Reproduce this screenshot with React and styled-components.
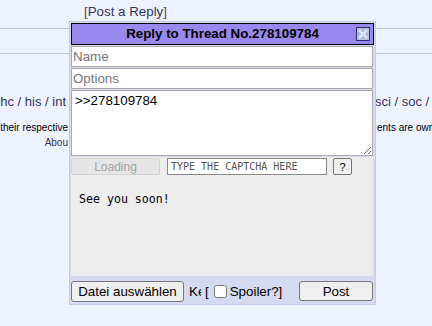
import React from 'react'
import styled, { createGlobalStyle } from 'styled-components'

const GlobalStyle = createGlobalStyle`
  html, body {
    margin: 0;
    padding: 0;
    background: #eef2ff;
  }
  body {
    font-family: "Liberation Sans", Arial, sans-serif;
    font-size: 13.33px;
    color: #000;
    overflow: hidden;
  }
`

const Page = styled.div`
  position: relative;
  width: 432px;
  height: 326px;
  overflow: hidden;
`

const PostLinkBar = styled.div`
  padding: 4px 0 0 84px;
  height: 17px;
  line-height: 16px;
  font-size: 13.33px;
  color: #6b4a1e;

  a {
    color: #34345c;
    text-decoration: none;
  }
`

const Rule = styled.hr`
  margin: ${p => p.$top}px 0 0;
  border: 0;
  border-top: 1px solid #b7c5d9;
  height: 0;
`

const Footer = styled.div`
  padding-top: ${p => p.$top}px;
`

const SplitLine = styled.div`
  display: grid;
  grid-template-columns: ${p => p.$left}px 309px 1fr;
  white-space: pre;
  font-size: ${p => p.$size}px;
  line-height: ${p => p.$line}px;
  color: ${p => p.$color};
  margin-top: ${p => p.$gap || 0}px;
`

const LeftCell = styled.span`
  overflow: hidden;
  display: flex;
  justify-content: flex-end;
`

const MidCell = styled.span`
  overflow: hidden;
  padding-left: 4px;
`

const RightCell = styled.span`
  overflow: hidden;
`

const QuickReply = styled.div`
  position: absolute;
  left: 69px;
  top: 21px;
  width: 303px;
  padding: 1px;
  background: #d6daf0;
  border: 1px solid #c4cbe6;
  display: flex;
  flex-direction: column;
  gap: 1px;
`

const Header = styled.div`
  position: relative;
  height: 20px;
  line-height: 20px;
  border: 1px solid #000;
  background: #9988ee;
  text-align: center;
  font-weight: bold;
  font-size: 13.33px;
`

const CloseIcon = styled.svg`
  position: absolute;
  right: 3px;
  top: 3px;
  display: block;
`

const Field = styled.input`
  box-sizing: border-box;
  width: 302px;
  height: 21px;
  margin: 0;
  padding: 1px 1px;
  border: 1px solid #aaa;
  background: #fff;
  font-family: "Liberation Sans", Arial, sans-serif;
  font-size: 13.33px;
  color: #000;

  &::placeholder {
    color: #757575;
  }
`

const Comment = styled.textarea`
  box-sizing: border-box;
  width: 302px;
  height: 66px;
  margin: 0;
  padding: 2px 3px;
  border: 1px solid #aaa;
  background: #fff;
  font-family: "Liberation Sans", Arial, sans-serif;
  font-size: 13.33px;
  color: #000;
  resize: both;
`

const CaptchaBox = styled.div`
  width: 302px;
  height: 119px;
  background: #ededed;
`

const CaptchaRow = styled.div`
  display: flex;
  align-items: center;
  height: 17px;
  margin-top: 1px;
`

const LoadButton = styled.button`
  box-sizing: border-box;
  width: 89px;
  height: 17px;
  padding: 0;
  border: 1px solid #d2d2d2;
  border-radius: 2px;
  background: #e6e6e6;
  color: #a3a3a3;
  font-family: "Liberation Sans", Arial, sans-serif;
  font-size: 12px;
`

const CaptchaInput = styled.input`
  box-sizing: border-box;
  width: 160px;
  height: 17px;
  margin: 0 0 0 7px;
  padding: 0 3px;
  border: 1px solid #888;
  background: #fff;
  font-family: "DejaVu Sans Mono", monospace;
  font-size: 10px;

  &::placeholder {
    color: #555;
  }
`

const SmallButton = styled.button`
  box-sizing: border-box;
  width: 19px;
  height: 17px;
  margin-left: 6px;
  padding: 0;
  border: 1px solid #777;
  border-radius: 2px;
  background: #efefef;
  font-family: "Liberation Sans", Arial, sans-serif;
  font-size: 11px;
  color: #000;
`

const CaptchaMessage = styled.div`
  margin: 17px 0 0 8px;
  font-family: "DejaVu Sans Mono", monospace;
  font-size: 11.6px;
  line-height: 14px;
`

const BottomRow = styled.div`
  display: flex;
  align-items: center;
  height: 22px;
  margin-top: 3px;
  margin-bottom: 1px;
  white-space: nowrap;
  font-size: 13.33px;
`

const NativeButton = styled.button`
  box-sizing: border-box;
  width: ${p => p.$width}px;
  height: ${p => p.$height}px;
  padding: 0;
  margin-left: ${p => p.$push ? 'auto' : '0'};
  margin-right: ${p => p.$push ? '1px' : '0'};
  border: 1px solid #767676;
  border-radius: 3px;
  background: #efefef;
  font-family: "Liberation Sans", Arial, sans-serif;
  font-size: 13.33px;
  color: #000;
`

const FileName = styled.span`
  display: inline-block;
  width: 12px;
  overflow: hidden;
  margin-left: 5px;
`

const SpoilerLabel = styled.label`
  display: flex;
  align-items: center;
  margin-left: 4px;

  input {
    width: 13px;
    height: 13px;
    margin: 0 3px 0 5px;
  }
`

const boardsLeft = 'a / b / c / d / e / f / g / gif / h / hr / k / m / o / p / r / s / t / u / v / vg / vm / vmg / vr / vrpg / vst / w / wg / i / ic / r9k / s4s / vip / cm / hm / lgbt / y / 3 / aco / adv / an / bant / biz / cgl / ck / co / diy / fa / fit / gd / hc / his / int'
const boardsMid = '/ jp / lit / mlp / mu / n / news / out / po / pol / pw / qst /'
const boardsRight = 'sci / soc / sp / tg / toy / trv / tv / vp / vt / wsg / wsr / x / xs ]'

const App = () => (
  <Page>
    <GlobalStyle />
    <PostLinkBar>
      [<a href="#reply">Post a Reply</a>]
    </PostLinkBar>
    <Rule $top={7} />
    <Rule $top={24} />
    <Footer $top={40}>
      <SplitLine $left={66} $size={13} $line={16} $color="#34345c">
        <LeftCell>{boardsLeft}</LeftCell>
        <MidCell>{boardsMid}</MidCell>
        <RightCell>{boardsRight}</RightCell>
      </SplitLine>
      <SplitLine $left={68} $size={10} $line={12} $color="#000" $gap={12}>
        <LeftCell>All trademarks and copyrights on this page are owned by their respective</LeftCell>
        <MidCell>parties. Images uploaded are the responsibility of the Poster. Comm</MidCell>
        <RightCell>ents are owned by the Poster.</RightCell>
      </SplitLine>
      <SplitLine $left={68} $size={10} $line={12} $color="#34345c" $gap={3}>
        <LeftCell>Abou</LeftCell>
        <MidCell>t</MidCell>
        <RightCell />
      </SplitLine>
    </Footer>

    <QuickReply>
      <Header>
        Reply to Thread No.278109784
        <CloseIcon width="14" height="14" viewBox="0 0 14 14">
          <rect x="0.5" y="0.5" width="13" height="13" fill="#c5cdec" stroke="#2e2e66" />
          <rect x="1.5" y="1.5" width="11" height="11" fill="#aeb8e0" />
          <path d="M3 3 L11 11 M11 3 L3 11" stroke="#f4f6ff" strokeWidth="2.4" />
          <path d="M3 3 L11 11 M11 3 L3 11" stroke="#8f9ad0" strokeWidth="0.6" strokeDasharray="1 1" />
        </CloseIcon>
      </Header>
      <Field placeholder="Name" />
      <Field placeholder="Options" />
      <Comment defaultValue=">>278109784" />
      <CaptchaBox>
        <CaptchaRow>
          <LoadButton disabled>Loading</LoadButton>
          <CaptchaInput placeholder="TYPE THE CAPTCHA HERE" />
          <SmallButton>?</SmallButton>
        </CaptchaRow>
        <CaptchaMessage>See you soon!</CaptchaMessage>
      </CaptchaBox>
      <BottomRow>
        <NativeButton $width={113} $height={21}>Datei auswählen</NativeButton>
        <FileName>Keine ausgewählt</FileName>
        <SpoilerLabel>
          [<input type="checkbox" />Spoiler?]
        </SpoilerLabel>
        <NativeButton $width={74} $height={20} $push>Post</NativeButton>
      </BottomRow>
    </QuickReply>
  </Page>
)

export default App
